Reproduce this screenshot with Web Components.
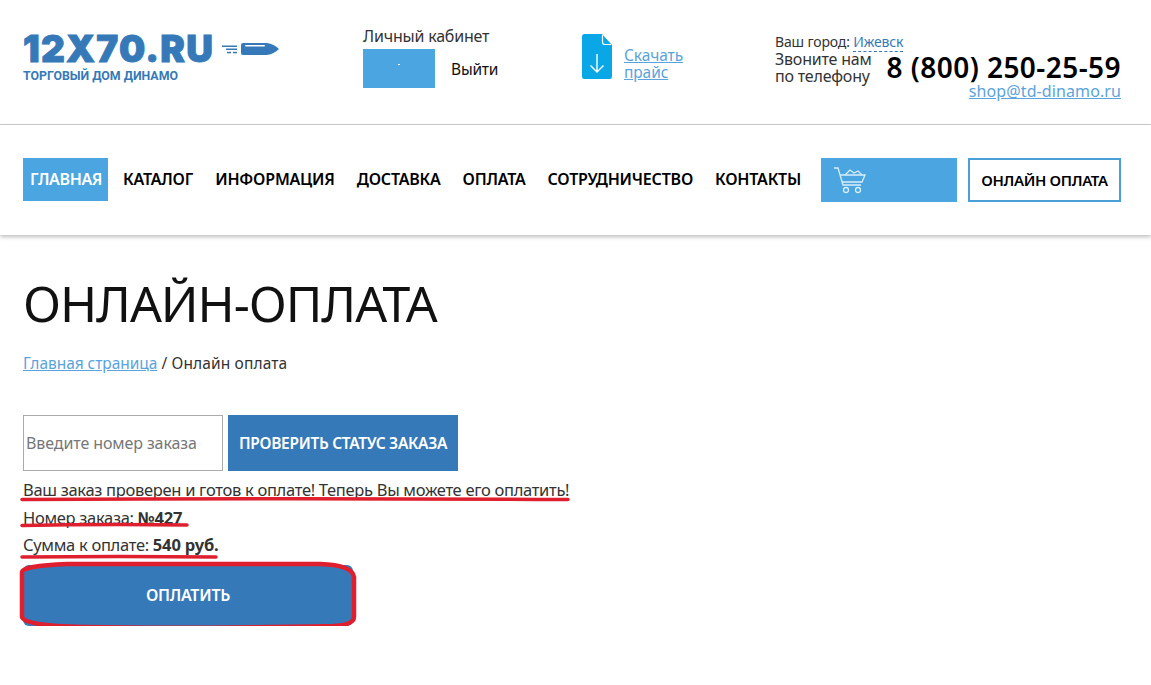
<!DOCTYPE html>
<html lang="ru">
<head>
<meta charset="utf-8">
<title>Онлайн-оплата</title>
<style>
  html, body { margin: 0; background: #fff; }
  body { font-family: "Noto Sans", "Open Sans", sans-serif; color: #222; width: 1151px; }
</style>
</head>
<body>
<site-header></site-header>
<site-nav></site-nav>
<order-page></order-page>

<script>
const headerTpl = document.createElement('template');
headerTpl.innerHTML = `
<style>
  :host {
    display: grid;
    grid-template-columns: 340px 219px 193px 346px;
    height: 124px;
    padding-left: 23px;
    border-bottom: 1px solid #ccc;
    font-family: "Noto Sans", sans-serif;
  }
  a { color: #5ba3dc; }

  /* logo */
  .logo { padding-top: 31px; color: #3679b8; }
  .logo-top { display: flex; align-items: center; gap: 9px; height: 36px; }
  .logo-name {
    font: 900 37px/36px Inter, sans-serif; letter-spacing: 1.2px; width: 190px; white-space: nowrap;
    -webkit-text-stroke: 0.9px #3679b8;
  }
  .logo-sub { font: 700 12.35px/14px Roboto, sans-serif; margin-top: 2px; white-space: nowrap; }

  /* account */
  .account { padding-top: 26px; }
  .account-title { font-size: 16px; line-height: 21px; color: #333; letter-spacing: -0.2px; }
  .account-row { display: flex; align-items: center; margin-top: 2px; }
  .avatar { width: 72px; height: 39px; background: radial-gradient(circle at 50% 40%, #fff 0.6px, transparent 1px), #4aa5e0; }
  .logout { margin-left: 16px; font-size: 15.5px; color: #111; letter-spacing: -0.2px; }

  /* price list */
  .price { display: flex; padding-top: 34px; gap: 12px; }
  .price svg { width: 30px; height: 45px; display: block; }
  .price a { font-size: 15.5px; line-height: 17px; display: block; width: 70px; margin-top: 13px; letter-spacing: -0.1px; }

  /* contacts */
  .contacts { padding-top: 33px; width: 346px; color: #333; }
  .city { font-size: 14px; line-height: 17px; letter-spacing: -0.15px; }
  .city span { color: #3679b8; border-bottom: 1px dashed #3679b8; }
  .call { display: flex; justify-content: space-between; align-items: center; margin-top: 1px; }
  .call-text { font-size: 16px; line-height: 17px; letter-spacing: -0.2px; }
  .phone { font-size: 28px; font-weight: 600; line-height: 34px; color: #000; letter-spacing: 0.45px; white-space: nowrap; position: relative; top: -1px; }
  .mail { display: block; text-align: right; font-size: 16px; line-height: 15px; margin-top: -1px; letter-spacing: 0.1px; }
</style>
<div class="logo">
  <div class="logo-top">
    <span class="logo-name">12X70.RU</span>
    <svg width="57" height="12" viewBox="0 0 57 12" fill="#3679b8">
      <rect x="0" y="2.500" width="15" height="1.500"/>
      <rect x="4" y="5.500" width="11" height="1.500"/>
      <rect x="5" y="8.800" width="4" height="1.500"/><rect x="11" y="8.800" width="4" height="1.500"/>
      <path d="M19 2 q0-2 2-2 H45 Q52 1 57 6 Q52 11 45 12 H21 q-2 0-2-2z"/>
      <rect x="23" y="2" width="20" height="1.600" rx="0.8" fill="#fff"/>
    </svg>
  </div>
  <div class="logo-sub">ТОРГОВЫЙ ДОМ ДИНАМО</div>
</div>
<div class="account">
  <div class="account-title">Личный кабинет</div>
  <div class="account-row"><div class="avatar"></div><span class="logout">Выйти</span></div>
</div>
<div class="price">
  <svg viewBox="0 0 30 45">
    <path d="M2.500 0 H20 L30 11 V42.500 a2.500 2.500 0 0 1 -2.500 2.500 H2.500 a2.500 2.500 0 0 1 -2.500 -2.500 V2.500 a2.500 2.500 0 0 1 2.500 -2.500z" fill="#0aa7e6"/>
    <path d="M20.500 1 V8 q0 2.500 2.500 2.500 H29" fill="none" stroke="#fff" stroke-width="1.200"/>
    <path d="M15 20 V38 M8.500 31.500 L15 38 L21.500 31.500" fill="none" stroke="#fff" stroke-width="1.400"/>
  </svg>
  <a href="#">Скачать прайс</a>
</div>
<div class="contacts">
  <div class="city">Ваш город: <span>Ижевск</span></div>
  <div class="call">
    <div class="call-text">Звоните нам<br>по телефону</div>
    <div class="phone">8 (800) 250-25-59</div>
  </div>
  <a class="mail" href="#">shop@td-dinamo.ru</a>
</div>
`;

class SiteHeader extends HTMLElement {
  constructor() {
    super();
    this.attachShadow({ mode: 'open' });
    this.shadowRoot.appendChild(headerTpl.content.cloneNode(true));
  }
}
customElements.define('site-header', SiteHeader);

const navTpl = document.createElement('template');
navTpl.innerHTML = `
<style>
  :host {
    display: flex;
    align-items: flex-start;
    height: 110px;
    padding: 33px 30px 0 23px;
    box-sizing: border-box;
    box-shadow: 0 2px 4px rgba(0,0,0,.25);
    font-family: "Noto Sans", sans-serif;
    position: relative;
  }
  ul { display: flex; list-style: none; margin: 0; padding: 0; gap: 8px; }
  li {
    height: 43px; line-height: 43px; padding: 0 7px;
    font-size: 16px; font-weight: 600; color: #000; letter-spacing: -0.2px; white-space: nowrap;
  }
  li.on { background: #4aa5e0; color: #fff; letter-spacing: -0.35px; width: 71px; text-align: center; }
  .cart {
    width: 136px; height: 44px; margin-left: auto; background: #4aa5e0;
    display: flex; align-items: center; padding-left: 12px; box-sizing: border-box;
  }
  .pay {
    margin-left: 11px; width: 153px; height: 44px; box-sizing: border-box;
    border: 2px solid #4a9fd8; text-align: center; line-height: 40px;
    font-size: 15px; font-weight: 600; color: #000; letter-spacing: -0.35px; white-space: nowrap;
  }
</style>
<ul>
  <li class="on">ГЛАВНАЯ</li><li>КАТАЛОГ</li><li>ИНФОРМАЦИЯ</li><li>ДОСТАВКА</li><li>ОПЛАТА</li><li>СОТРУДНИЧЕСТВО</li><li>КОНТАКТЫ</li>
</ul>
<div class="cart">
  <svg width="34" height="28" viewBox="0 0 34 28" fill="none" stroke="#d8eefb" stroke-width="1.300">
    <path d="M1 2 H5 L10 19 H28"/>
    <path d="M7 9 H32 L29 16 H9"/>
    <path d="M12 9 L17 4 L21 7 L25 5 L29 9" stroke-width="1.200"/>
    <circle cx="13" cy="24" r="2.500"/><circle cx="25" cy="24" r="2.500"/>
  </svg>
</div>
<div class="pay">ОНЛАЙН ОПЛАТА</div>
`;

class SiteNav extends HTMLElement {
  constructor() {
    super();
    this.attachShadow({ mode: 'open' });
    this.shadowRoot.appendChild(navTpl.content.cloneNode(true));
  }
}
customElements.define('site-nav', SiteNav);

const pageTpl = document.createElement('template');
pageTpl.innerHTML = `
<style>
  :host {
    display: block;
    padding: 0 23px;
    font-family: "Noto Sans", sans-serif;
    color: #333;
  }
  h1 { margin: 0; padding-top: 33px; font-size: 50px; line-height: 70px; font-weight: 400; color: #111; letter-spacing: -1.05px; }
  .crumbs { margin-top: 14px; font-size: 15.500px; line-height: 22px; letter-spacing: 0.12px; }
  .crumbs a { color: #5ba3dc; letter-spacing: -0.05px; }
  .check { display: flex; gap: 5px; margin-top: 41px; }
  .field {
    width: 200px; height: 56px; box-sizing: border-box; border: 1px solid #aaa;
    padding-left: 2px; line-height: 54px; font-size: 16px; color: #777; letter-spacing: -0.1px;
  }
  .btn {
    background: #3679b8; color: #fff; font-weight: 600; text-align: center;
  }
  .check .btn { width: 230px; height: 56px; line-height: 56px; font-size: 15.500px; letter-spacing: -0.3px; }
  .result { position: relative; margin-top: 5px; width: 560px; }
  .result p { margin: 0; font-size: 16.500px; line-height: 27.500px; letter-spacing: -0.3px; }
  .result b { letter-spacing: -0.15px; }
  .pay { width: 330px; height: 61px; line-height: 60px; margin-top: 6.500px; border-radius: 6px; font-size: 16px; letter-spacing: -0.25px; }
  svg.ink { position: absolute; left: -23px; top: -5px; overflow: visible; pointer-events: none; }
</style>
<h1>ОНЛАЙН-ОПЛАТА</h1>
<div class="crumbs"><a href="#">Главная страница</a> / Онлайн оплата</div>
<div class="check">
  <div class="field">Введите номер заказа</div>
  <div class="btn">ПРОВЕРИТЬ СТАТУС ЗАКАЗА</div>
</div>
<div class="result">
  <p>Ваш заказ проверен и готов к оплате! Теперь Вы можете его оплатить!</p>
  <p>Номер заказа: <b>№427</b></p>
  <p>Сумма к оплате: <b>540 руб.</b></p>
  <div class="btn pay">ОПЛАТИТЬ</div>
  <svg class="ink" width="400" height="160" fill="none" stroke="#e01f2e" stroke-linecap="round">
    <path d="M22 28.500 Q300 27 568 28.500" stroke-width="3.500"/>
    <path d="M22 54.500 Q100 53 187 54" stroke-width="3.500"/>
    <path d="M22 86 Q120 85 216 86" stroke-width="3.500"/>
    <path d="M22 101 Q22 95 67 93 H320 Q352 94 354 106 V146 Q354 154 333 155 Q180 158 83 156 Q24 155 22 146 Z" stroke-width="4.500"/>
  </svg>
</div>
`;

class OrderPage extends HTMLElement {
  constructor() {
    super();
    this.attachShadow({ mode: 'open' });
    this.shadowRoot.appendChild(pageTpl.content.cloneNode(true));
  }
}
customElements.define('order-page', OrderPage);
</script>
</body>
</html>
